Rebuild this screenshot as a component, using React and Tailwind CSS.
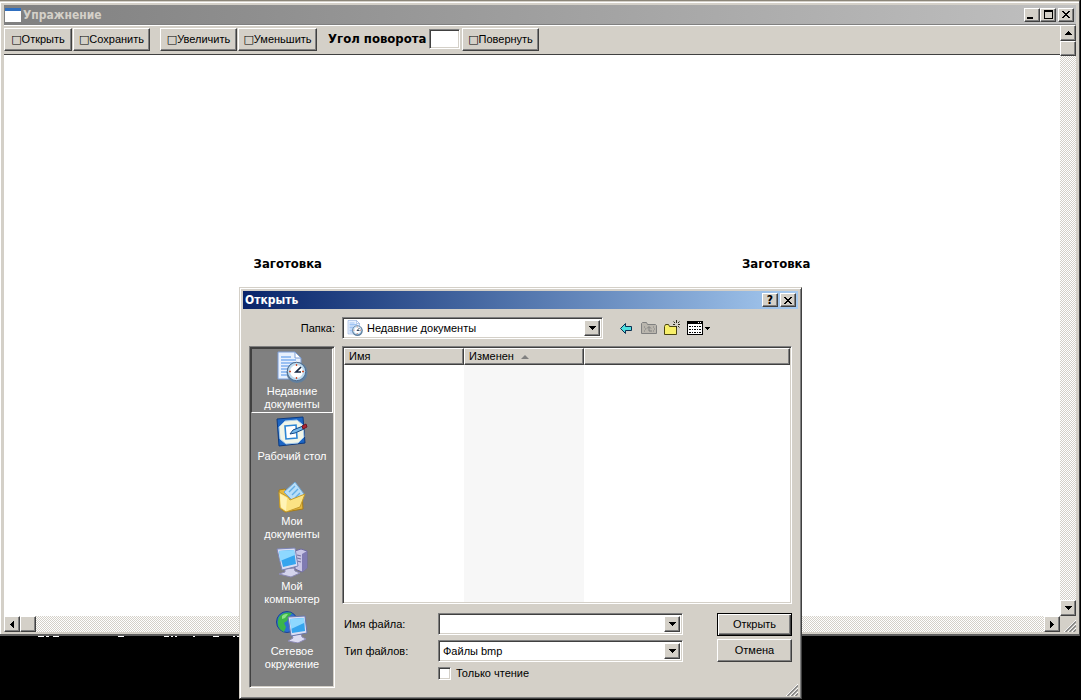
import React, { useState } from 'react';

const UI_FONT = "font-['Liberation_Sans',sans-serif] text-[11px] leading-[13px] text-black";
const CAPTION_FONT = "font-['DejaVu_Sans_Condensed','DejaVu_Sans',sans-serif] text-[12px] leading-[16px] font-bold";
const LABEL_FONT = "font-['DejaVu_Sans_Condensed','DejaVu_Sans',sans-serif] text-[13px] leading-[16px] font-bold";

const RAISED = 'bg-[#d4d0c8] border border-t-white border-l-white border-b-[#404040] border-r-[#404040] shadow-[inset_-1px_-1px_0_#808080]';
const SUNKEN = 'border border-t-[#808080] border-l-[#808080] border-b-white border-r-white shadow-[inset_1px_1px_0_#404040,inset_-1px_-1px_0_#d4d0c8]';
const TRACK = 'bg-[repeating-conic-gradient(#ffffff_0_25%,#d4d0c8_0_50%)] bg-[length:2px_2px]';

const places = [
  { id: 'recent', lines: ['Недавние', 'документы'], Icon: RecentIcon },
  { id: 'desktop', lines: ['Рабочий стол'], Icon: DesktopIcon },
  { id: 'documents', lines: ['Мои', 'документы'], Icon: DocumentsIcon },
  { id: 'computer', lines: ['Мой', 'компьютер'], Icon: ComputerIcon },
  { id: 'network', lines: ['Сетевое', 'окружение'], Icon: NetworkIcon },
];

function RecentIcon({ className }) {
  return (
    <svg viewBox="0 0 32 32" className={className} aria-hidden="true">
      <path d="M2 1h17l6 6v21H2z" fill="#e8f1fe" stroke="#7c9ed6" />
      <path d="M19 1v6h6z" fill="#fff" stroke="#7c9ed6" />
      <path d="M5 6h10M5 9h15M5 12h13M5 15h9M5 18h7M5 21h6M5 24h7" stroke="#7fb0ef" strokeWidth="1.4" />
      <circle cx="21" cy="21.5" r="10.5" fill="#5f7f9f" />
      <circle cx="20.5" cy="20.5" r="9.2" fill="#bcdcf0" stroke="#4f6b8d" />
      <circle cx="20.5" cy="20.5" r="7" fill="#fff" stroke="#b9d4ea" />
      <path d="M20.5 13v2M20.5 26v2M13 20.5h2M26 20.5h2" stroke="#d0512e" strokeWidth="1.3" />
      <path d="M25 16l-5 5h5" fill="none" stroke="#182a44" strokeWidth="1.7" />
    </svg>
  );
}

function DesktopIcon({ className }) {
  return (
    <svg viewBox="0 0 32 32" className={className} aria-hidden="true">
      <path d="M1 3l26-2 2 26-26 3z" fill="#1d66c4" stroke="#0c3a80" />
      <path d="M9 5l12-1 6 5 1 12-6 6-12 1-6-5-1-12z" fill="#f1f5e8" stroke="#a8cbe8" />
      <path d="M9 10l11-1 1 13-11 1z" fill="#fff" stroke="#2d86d4" strokeWidth="1.6" />
      <path d="M14 18l3-4 10-4 1 3-9 4z" fill="#74b8ec" stroke="#174b87" />
      <path d="M26 10l4-2 1 3-4 2z" fill="#b02431" stroke="#701420" />
    </svg>
  );
}

function DocumentsIcon({ className }) {
  return (
    <svg viewBox="0 0 32 32" className={className} aria-hidden="true">
      <path d="M3 9l6-1 3 3 14 0 1 17-18 3-5-4z" fill="#e5b83e" stroke="#a67b17" />
      <path d="M8 11L19 1l9 12-9 9z" fill="#b8def8" stroke="#6ea5d3" />
      <path d="M13 11l6-6M16 14l6-6M19 17l5-5" stroke="#62aee6" strokeWidth="1.4" />
      <path d="M3 11l9 5 2 3 15-6-5 13-14 5-6-4z" fill="#fbe384" stroke="#c39a2c" />
      <path d="M4 13l7 4-1 13-5-4z" fill="#fff3b5" />
    </svg>
  );
}

function ComputerIcon({ className }) {
  return (
    <svg viewBox="0 0 32 32" className={className} aria-hidden="true">
      <path d="M19 5l6-2 6 2v17l-5 4-7-3z" fill="#c9c6e6" stroke="#6f6b9f" />
      <path d="M26 8l5-3v17l-5 4z" fill="#7f7bb2" />
      <path d="M21 9l4 1M21 12l4 1M21 15l4 1" stroke="#77739f" strokeWidth="1.2" />
      <path d="M9 23l9-1 1 3 5 2-9 4-12-3 6-2z" fill="#d4d4ec" stroke="#8b89b5" />
      <path d="M1 3l18-1 3 18-16 4z" fill="#d9def4" stroke="#7b84b7" />
      <path d="M3 5l15-1 2 14-13 3z" fill="#35a5ee" />
      <path d="M3 5l15-1 1 5-15 6z" fill="#8ed8ff" />
    </svg>
  );
}

function NetworkIcon({ className }) {
  return (
    <svg viewBox="0 0 32 32" className={className} aria-hidden="true">
      <circle cx="11" cy="11" r="10.5" fill="#2c6fd0" stroke="#1a4493" />
      <path d="M3 6c4-5 9-5 13-4l-3 4-2 4-3 2 2 4-2 5c-5-2-8-8-5-15z" fill="#3cb54a" />
      <path d="M6 5c2-2 4-2 6-2l-3 4-3 1z" fill="#8ce287" />
      <path d="M16 24l9-1 1 3 4 2-8 4-10-2 5-3z" fill="#dcdcf1" stroke="#8b89b5" />
      <path d="M12 6l17-1 2 17-16 3z" fill="#d9def4" stroke="#6a76ac" />
      <path d="M14 8l14-1 1 13-13 2z" fill="#35a5ee" />
      <path d="M14 8l14-1v5l-13 6z" fill="#8ed8ff" />
    </svg>
  );
}

function Arrow({ direction }) {
  const shapes = {
    up: 'M3 0h1v1h1v1h1v1h1v1H0V3h1V2h1V1h1z',
    down: 'M0 0h7v1H6v1H5v1H4v1H3V3H2V2H1V1H0z',
    left: 'M3 0h1v7H3V6H2V5H1V4H0V3h1V2h1V1h1z',
    right: 'M0 0h1v1h1v1h1v1h1v1H3v1H2v1H1v1H0z',
  };
  const vertical = direction === 'up' || direction === 'down';
  return (
    <svg
      viewBox={vertical ? '0 0 7 4' : '0 0 4 7'}
      className={vertical ? 'w-[7px] h-1' : 'w-1 h-[7px]'}
      shapeRendering="crispEdges"
      aria-hidden="true"
    >
      <path d={shapes[direction]} />
    </svg>
  );
}

function Grip() {
  return (
    <svg viewBox="0 0 12 12" className="w-3 h-3" aria-hidden="true">
      <path d="M0 12L12 0M4 12l8-8M8 12l4-4" stroke="#fff" />
      <path d="M1.5 12L12 1.5M5.5 12L12 5.5M9.5 12L12 9.5" stroke="#808080" strokeWidth="1.4" />
    </svg>
  );
}

function CaptionButton({ label, children }) {
  return (
    <button aria-label={label} className={`${RAISED} w-4 h-[14px] flex items-center justify-center`}>
      {children}
    </button>
  );
}

const CloseGlyph = () => (
  <svg viewBox="0 0 8 7" className="w-2 h-[7px]" shapeRendering="crispEdges" aria-hidden="true">
    <path d="M0 0h2v1h1v1h2V1h1V0h2v1H7v1H6v1H5v1h1v1h1v1h1v1H6V6H5V5H3v1H2v1H0V6h1V5h1V4h1V3H2V2H1V1H0z" />
  </svg>
);

function ToolButton({ className, children }) {
  return (
    <button className={`${RAISED} h-[23px] whitespace-nowrap ${className}`}>
      <span className="font-['DejaVu_Sans']">□</span>{children}
    </button>
  );
}

function ScrollButton({ direction }) {
  return (
    <button aria-label={direction} className={`${RAISED} w-4 h-4 shrink-0 flex items-center justify-center`}>
      <Arrow direction={direction} />
    </button>
  );
}

function MainWindow() {
  const [angle, setAngle] = useState('');

  return (
    <main className="mr-px bg-[#d4d0c8] border-t border-t-[#8c8679] border-r border-b-2 border-r-[#404040] border-b-[#606060]">
      <div className="mt-px border-t border-l border-white pt-[2px] pl-[3px] pr-[3px] pb-[2px]">
        <header className="h-[19px] pl-px pr-[2px] flex items-center bg-linear-to-r from-[#808080] to-[#c0c0c0]">
          <svg viewBox="0 0 16 14" className="w-4 h-[14px]" aria-hidden="true">
            <path d="M0 0h16v14H0z" fill="#fff" />
            <path d="M0 0h16v3H0z" fill="#2f6fc0" />
          </svg>
          <h1 className={`${CAPTION_FONT} ml-[2px] flex-1 text-[#d4d0c8]`}>Упражнение</h1>
          <div className="flex">
            <CaptionButton label="Свернуть">
              <span className="w-[6px] h-[2px] mt-[6px] mr-1 bg-black" />
            </CaptionButton>
            <CaptionButton label="Развернуть">
              <span className="w-[9px] h-[9px] border border-t-2 border-black" />
            </CaptionButton>
            <span className="w-[2px]" />
            <CaptionButton label="Закрыть"><CloseGlyph /></CaptionButton>
          </div>
        </header>

        <div className="flex border-t border-[#808080]">
          <div className="flex-1 min-w-0">
            <div className="h-[30px] pb-[2px] flex items-center border-t border-t-white border-b border-b-[#404040]">
              <ToolButton className="w-[68px]">Открыть</ToolButton>
              <ToolButton className="w-[77px] ml-px">Сохранить</ToolButton>
              <ToolButton className="w-[77px] ml-[10px]">Увеличить</ToolButton>
              <ToolButton className="w-[79px] ml-px">Уменьшить</ToolButton>
              <label htmlFor="angle" className={`${LABEL_FONT} ml-[11px] w-[98px] whitespace-nowrap`}>Угол поворота</label>
              <input
                id="angle"
                value={angle}
                onChange={(e) => setAngle(e.target.value)}
                className={`${SUNKEN} w-[31px] h-5 ml-[3px] px-1 bg-white`}
              />
              <ToolButton className="w-[77px] ml-[2px]">Повернуть</ToolButton>
            </div>
            <div className={`${LABEL_FONT} h-[561px] bg-white pt-[201px] flex items-start justify-center gap-[420px]`}>
              <span>Заготовка</span>
              <span>Заготовка</span>
            </div>
            <div className={`${TRACK} flex`}>
              <ScrollButton direction="left" />
              <span className={`${RAISED} w-4 h-4`} />
              <span className="flex-1" />
              <ScrollButton direction="right" />
            </div>
          </div>
          <div className={`${TRACK} w-4 flex flex-col`}>
            <ScrollButton direction="up" />
            <span className={`${RAISED} w-4 h-[15px]`} />
            <span className="flex-1" />
            <ScrollButton direction="down" />
            <span className="h-4 flex items-end justify-end bg-[#d4d0c8]"><Grip /></span>
          </div>
        </div>
      </div>
    </main>
  );
}

// Tops of console characters that stick out below the main window
function ConsoleRemains() {
  return (
    <svg viewBox="0 0 240 1" className="w-60 h-px" shapeRendering="crispEdges" aria-hidden="true">
      <path
        d="M38 0h6v1h-6zM46 0h3v1h-3zM53 0h6v1h-6zM118 0h6v1h-6zM164 0h5v1h-5zM171 0h2v1h-2zM175 0h2v1h-2zM193 0h2v1h-2zM213 0h6v1h-6zM233 0h2v1h-2zM237 0h3v1h-3z"
        fill="#fff"
      />
    </svg>
  );
}

function DropArrow() {
  return (
    <span className={`${RAISED} pointer-events-none absolute right-[2px] top-[2px] bottom-[2px] w-4 flex items-center justify-center`}>
      <Arrow direction="down" />
    </span>
  );
}

function BrowseIcons() {
  return (
    <div className="flex items-center gap-[7px]">
      <button aria-label="Назад">
        <svg viewBox="0 0 16 16" className="w-4 h-4" aria-hidden="true">
          <path d="M2.5 8.5l5-5v3h6v4h-6v3z" fill="#4fe0e0" stroke="#0a2f52" />
        </svg>
      </button>
      <button aria-label="На один уровень вверх">
        <svg viewBox="0 0 16 16" className="w-4 h-4" aria-hidden="true">
          <path d="M.5 13.5v-10l1-1h4l1 2h8l1 1v8z" fill="#b9b5ad" stroke="#808080" />
          <path d="M3 7h1M4 9h1M3 11h1M12 7h1M13 9h1M12 11h1" stroke="#808080" />
          <path d="M6 8.5l2-2 2 2M8 7v4h3" fill="none" stroke="#808080" />
        </svg>
      </button>
      <button aria-label="Создание новой папки">
        <svg viewBox="0 0 16 16" className="w-4 h-4" aria-hidden="true">
          <path d="M.5 14.5v-8l1-2h3l1 2h7v8z" fill="#f7ef6a" stroke="#4a4510" />
          <path d="M12.5 0v3M12.5 6v2M9 4.5h2M14 4.5h2M9.5 1.5l1.5 1.5M15.5 1.5L14 3M14 6l1.5 1.5" stroke="#2d2d20" />
        </svg>
      </button>
      <button aria-label="Меню вид" className="flex items-center gap-[2px]">
        <svg viewBox="0 0 16 14" className="w-4 h-[14px]" shapeRendering="crispEdges" aria-hidden="true">
          <path d="M0 0h16v14H0z" />
          <path d="M1 3h14v10H1z" fill="#fff" />
          <path d="M11 1h1v1h-1zM13 1h1v1h-1z" fill="#fff" />
          <path d="M2 5h2v1H2zM5 5h1v1H5zM7 5h2v1H7zM10 5h1v1h-1zM12 5h2v1h-2zM2 8h2v1H2zM5 8h1v1H5zM7 8h2v1H7zM10 8h1v1h-1zM12 8h2v1h-2zM2 11h2v1H2zM5 11h1v1H5zM7 11h2v1H7zM10 11h1v1h-1zM12 11h2v1h-2z" />
        </svg>
        <svg viewBox="0 0 5 3" className="w-[5px] h-[3px]" shapeRendering="crispEdges" aria-hidden="true">
          <path d="M0 0h5v1H4v1H3v1H2V2H1V1H0z" />
        </svg>
      </button>
    </div>
  );
}

function PlacesBar({ active, onSelect }) {
  return (
    <nav className={`${SUNKEN} w-[86px] h-[342px] p-px bg-[#808080] text-white`}>
      {places.map(({ id, lines, Icon }) => (
        <button
          key={id}
          onClick={() => onSelect(id)}
          className={`w-full h-[65px] pt-[2px] flex flex-col items-center border ${
            id === active ? 'border-t-[#404040] border-l-[#404040] border-b-white border-r-white' : 'border-transparent'
          }`}
        >
          <Icon className="w-8 h-8" />
          <span className="mt-[2px]">
            {lines.map((line) => <span key={line} className="block whitespace-nowrap">{line}</span>)}
          </span>
        </button>
      ))}
    </nav>
  );
}

function FileList() {
  const head = `${RAISED} h-[17px] pl-1 text-left font-normal`;
  return (
    <div className={`${SUNKEN} h-[258px] p-px bg-white`}>
      <table className="w-full h-full table-fixed border-separate border-spacing-0">
        <thead>
          <tr>
            <th className={`${head} w-[120px]`}>Имя</th>
            <th className={`${head} w-[120px]`}>
              <span className="flex items-center gap-[7px]">
                Изменен
                <svg viewBox="0 0 8 4" className="w-2 h-1" aria-hidden="true">
                  <path d="M0 4l4-4 4 4z" fill="#808080" />
                </svg>
              </span>
            </th>
            <th className={head} />
          </tr>
        </thead>
        <tbody>
          <tr>
            <td />
            <td className="bg-[#f7f7f7]" />
            <td />
          </tr>
        </tbody>
      </table>
    </div>
  );
}

function OpenDialog() {
  const [place, setPlace] = useState('recent');
  const [fileName, setFileName] = useState('');
  const [readOnly, setReadOnly] = useState(false);

  return (
    <div
      role="dialog"
      aria-labelledby="dialog-title"
      className="absolute left-[239px] top-[287px] w-[563px] h-[412px] bg-[#d4d0c8] border border-t-[#d4d0c8] border-l-[#d4d0c8] border-b-[#404040] border-r-[#404040] shadow-[inset_1px_1px_0_#fff,inset_-1px_-1px_0_#808080] p-[3px]"
    >
      <header className="h-[18px] pl-[2px] pr-[2px] flex items-center bg-linear-to-r from-[#0a246a] to-[#a6caf0]">
        <h2 id="dialog-title" className={`${CAPTION_FONT} flex-1 text-white`}>Открыть</h2>
        <div className="flex gap-[2px]">
          <CaptionButton label="Справка"><span className={CAPTION_FONT}>?</span></CaptionButton>
          <CaptionButton label="Закрыть"><CloseGlyph /></CaptionButton>
        </div>
      </header>

      <div className="mt-2 flex items-center">
        <label htmlFor="folder" className="w-[92px] text-right">Папка:</label>
        <div className={`${SUNKEN} relative ml-[7px] w-[261px] h-[22px] bg-white flex items-center`}>
          <RecentIcon className="w-4 h-4 ml-1" />
          <select id="folder" className="flex-1 h-full pl-1 appearance-none outline-none">
            <option>Недавние документы</option>
          </select>
          <DropArrow />
        </div>
        <div className="ml-[15px]"><BrowseIcons /></div>
      </div>

      <div className="mt-[7px] ml-[6px] mr-[6px] flex gap-[7px]">
        <PlacesBar active={place} onSelect={setPlace} />
        <div className="flex-1">
          <FileList />
          <div className="mt-[9px] flex justify-between">
            <div className="pl-[2px] grid grid-cols-[94px_245px] items-center gap-y-[5px]">
              <label htmlFor="file-name">Имя файла:</label>
              <div className={`${SUNKEN} relative h-[22px] bg-white`}>
                <input
                  id="file-name"
                  value={fileName}
                  onChange={(e) => setFileName(e.target.value)}
                  className="w-full h-full pl-1 pr-5 outline-none"
                />
                <DropArrow />
              </div>
              <label htmlFor="file-type">Тип файлов:</label>
              <div className={`${SUNKEN} relative h-[22px] bg-white`}>
                <select id="file-type" className="w-full h-full pl-1 appearance-none outline-none">
                  <option>Файлы bmp</option>
                </select>
                <DropArrow />
              </div>
              <label className="col-start-2 flex items-center gap-[5px]">
                <input
                  type="checkbox"
                  checked={readOnly}
                  onChange={(e) => setReadOnly(e.target.checked)}
                  className={`${SUNKEN} w-[13px] h-[13px] appearance-none bg-white checked:bg-[#404040]`}
                />
                Только чтение
              </label>
            </div>
            <div className="w-[75px] flex flex-col gap-[3px]">
              <button className="h-[23px] border border-black bg-[#d4d0c8] shadow-[inset_1px_1px_0_#fff,inset_-1px_-1px_0_#404040,inset_-2px_-2px_0_#808080]">
                Открыть
              </button>
              <button className={`${RAISED} h-[23px]`}>Отмена</button>
            </div>
          </div>
        </div>
      </div>
      <span className="absolute right-[3px] bottom-[2px]"><Grip /></span>
    </div>
  );
}

export default function App() {
  return (
    <div className={`${UI_FONT} relative min-h-screen bg-black`}>
      <MainWindow />
      <ConsoleRemains />
      <OpenDialog />
    </div>
  );
}
